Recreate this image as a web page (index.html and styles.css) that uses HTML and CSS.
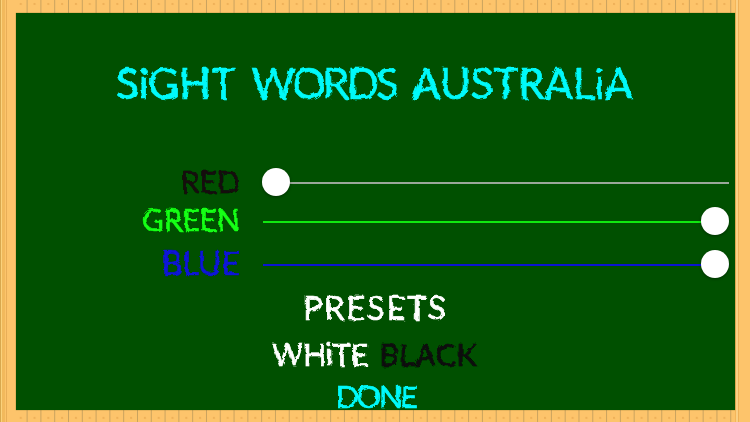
FILE: index.html
```html
<!DOCTYPE html>
<html lang="en">
<head>
<meta charset="utf-8">
<title>Sight Words Australia</title>
<link rel="stylesheet" href="styles.css">
</head>
<body>
<svg class="defs" width="0" height="0" aria-hidden="true">
  <filter id="chalk" x="-5%" y="-20%" width="110%" height="140%">
    <feTurbulence type="fractalNoise" baseFrequency="0.12" numOctaves="3" seed="7" result="n"/>
    <feDisplacementMap in="SourceGraphic" in2="n" scale="4.5"/>
  </filter>
</svg>
<main class="frame">
  <section class="board">
    <h1 class="title">SiGHT <span class="tight">WORDS</span> AUSTRALiA</h1>
    <div class="sliders">
      <div class="row row-red">
        <span class="label">RED</span>
        <div class="track at-min"><span class="thumb"></span></div>
      </div>
      <div class="row row-green">
        <span class="label">GREEN</span>
        <div class="track at-max"><span class="thumb"></span></div>
      </div>
      <div class="row row-blue">
        <span class="label">BLUE</span>
        <div class="track at-max"><span class="thumb"></span></div>
      </div>
    </div>
    <div class="presets">
      <div class="presets-title">PRESETS</div>
      <div class="preset-row"><span class="white">WHiTE</span><span class="black">BLACK</span></div>
      <div class="done">DONE</div>
    </div>
  </section>
</main>
</body>
</html>
```
FILE: styles.css
```css
* { box-sizing: border-box; }
html, body { margin: 0; height: 100%; overflow: hidden; }
.defs { position: absolute; }
.frame {
  width: 750px; height: 422px;
  padding: 13px 15px 12px 16px;
  background-color: #fdc46b;
  background-image:
    linear-gradient(90deg, #d8a84e 0 1px, #fbd27c 1px 2px, #f2b95c 2px 5px, #fdc46b 5px 6px, #e8ae58 6px 7px, #fdc46b 7px),
    linear-gradient(90deg, #f3b65a 0 1px, #fbd084 1px 3px, #eeb057 3px 4px, #fdc46b 4px),
    radial-gradient(circle at 7px 4px, #efb159 0 1px, transparent 1.5px),
    linear-gradient(90deg, #fdc46b 0 12.8px, #c9a25e 12.8px 13.8px);
  background-size: 16px 100%, 15px 100%, 13.8px 13.8px, 13.8px 100%;
  background-position: 0 0, 100% 0, 0 0, 0 0;
  background-repeat: no-repeat, no-repeat, repeat, repeat-x;
}
.board {
  height: 100%;
  background: #005000;
  box-shadow: 0 0 1px #6f6420;
  font-family: "Lato", sans-serif;
  display: flex;
  flex-direction: column;
}
.title, .label, .presets-title, .preset-row, .done { filter: url(#chalk); -webkit-text-stroke: .7px currentColor; }
.title {
  margin: 48px 0 0;
  height: 44px;
  padding-right: 2px;
  text-align: center;
  font-size: 42px;
  line-height: 44px;
  font-weight: 400;
  word-spacing: 6px;
  color: #00fafa;
}
.tight { letter-spacing: -2.5px; }
.sliders { margin-top: 58px; padding-right: 6px; }
.row { display: grid; grid-template-columns: 224px 1fr; column-gap: 23px; align-items: center; height: 39px; }
.row-blue { height: 43px; padding-top: 4px; }
.label { text-align: right; font-size: 30px; line-height: 34px; padding-bottom: 3px; }
.row-red .label { color: #140a0a; }
.row-green .label { color: #14ff14; padding-bottom: 5px; }
.row-blue .label { color: #0a14d8; font-size: 32px; }
.track { position: relative; height: 2px; background: #9aa89a; }
.row-green .track { background: #10e810; }
.row-blue .track { background: #0a14d0; }
.thumb {
  position: absolute; top: -14px; width: 28px; height: 28px;
  border-radius: 50%; background: #fff;
  box-shadow: 0 1px 3px rgba(0,0,0,.4);
}
.at-min .thumb { left: -1px; }
.at-max .thumb { right: 0; }
.presets { text-align: center; color: #fff; margin-top: 4px; font-size: 32px; }
.presets-title { line-height: 40px; height: 44px; letter-spacing: 2.1px; }
.preset-row { display: flex; justify-content: center; gap: 11px; font-size: 30px; line-height: 44px; height: 41px; margin-right: 2px; }
.black { color: #0a0a0a; font-size: 31px; }
.done { margin-top: 11px; color: #00fafa; font-size: 31px; letter-spacing: -2.5px; line-height: 24px; height: 24px; }
```
